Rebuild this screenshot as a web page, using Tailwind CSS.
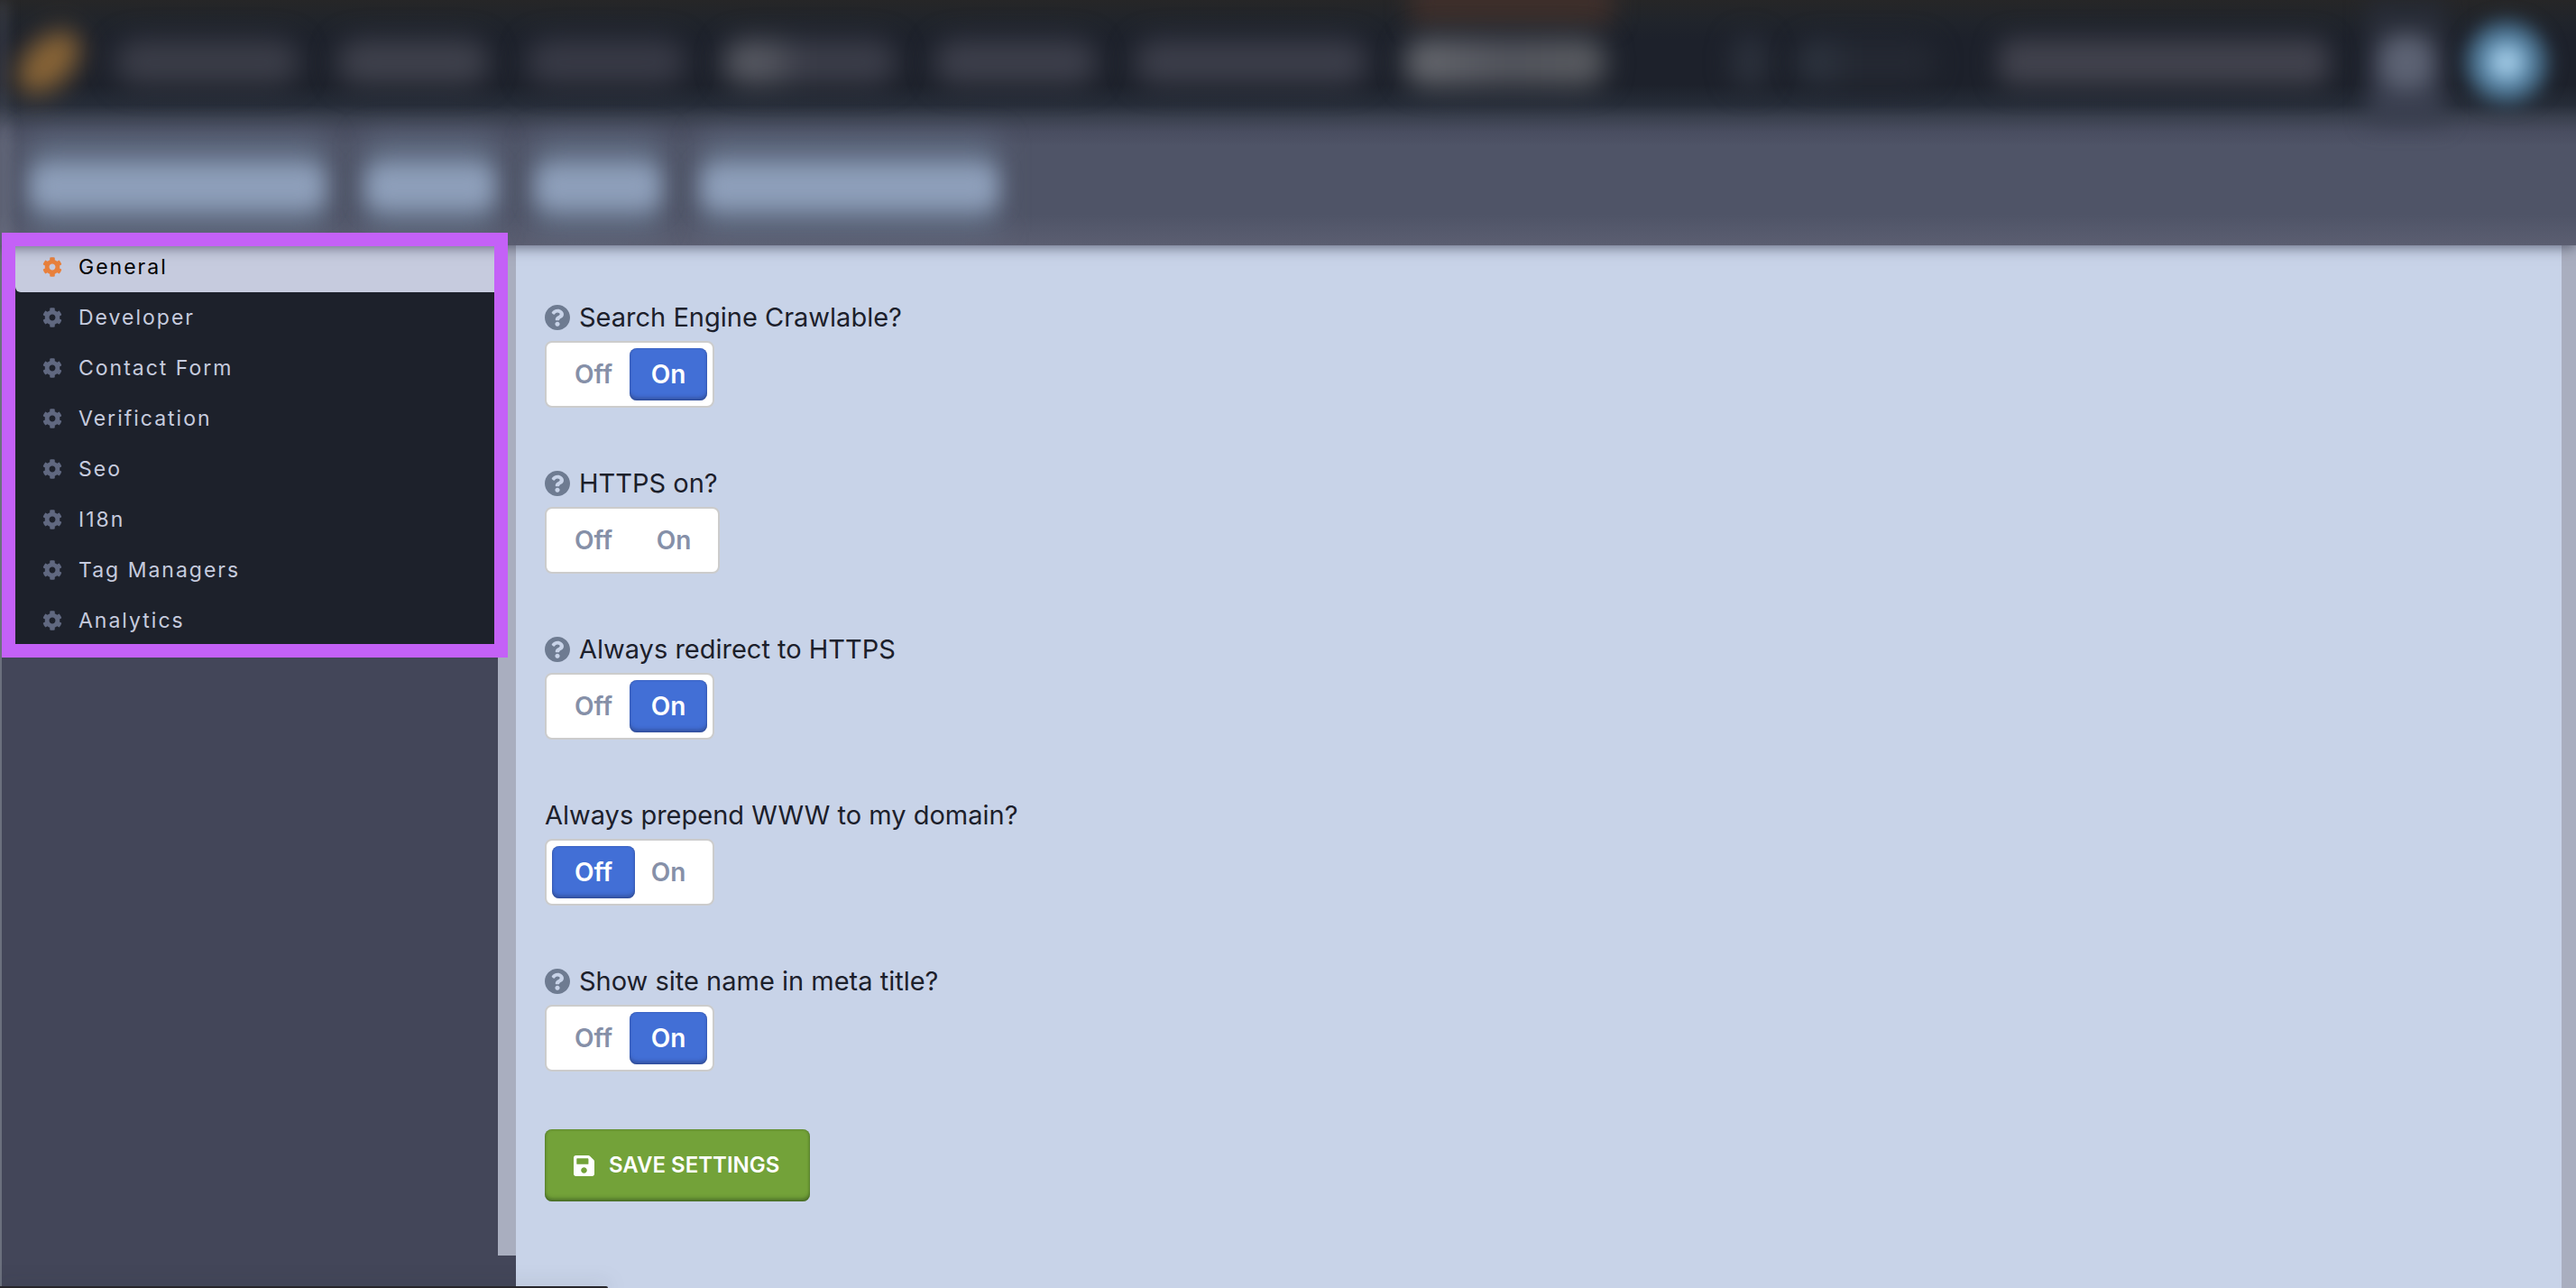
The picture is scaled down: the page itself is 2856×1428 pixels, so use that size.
<!DOCTYPE html>
<html lang="en">
<head>
<meta charset="utf-8">
<title>Settings</title>
<script src="https://cdn.jsdelivr.net/npm/@tailwindcss/browser@4"></script>
</head>
<body class="relative flex min-h-screen flex-col overflow-x-hidden bg-[#c8d3e8] font-['Inter',sans-serif] text-[#1c202b]">

<svg class="hidden" aria-hidden="true">
  <symbol id="cog" viewBox="0 0 512 512"><path d="M487.4 315.7l-42.6-24.6c4.3-23.2 4.3-47 0-70.2l42.6-24.6c4.9-2.8 7.1-8.6 5.5-14-11.1-35.6-30-67.8-54.7-94.6-3.8-4.1-10-5.1-14.8-2.3L380.8 110c-17.9-15.4-38.5-27.3-60.8-35.1V25.8c0-5.6-3.9-10.5-9.4-11.7-36.7-8.2-74.3-7.8-109.2 0-5.5 1.2-9.4 6.1-9.4 11.7V75c-22.2 7.9-42.8 19.8-60.8 35.1L88.7 85.5c-4.9-2.8-11-1.9-14.8 2.3-24.7 26.7-43.6 58.9-54.7 94.6-1.7 5.4.6 11.2 5.5 14L67.3 221c-4.3 23.2-4.3 47 0 70.2l-42.6 24.6c-4.9 2.8-7.1 8.6-5.5 14 11.1 35.6 30 67.8 54.7 94.6 3.8 4.1 10 5.1 14.8 2.3l42.6-24.6c17.9 15.4 38.5 27.3 60.8 35.1v49.2c0 5.6 3.9 10.5 9.4 11.7 36.7 8.2 74.3 7.8 109.2 0 5.5-1.2 9.4-6.1 9.4-11.7v-49.2c22.2-7.9 42.8-19.8 60.8-35.1l42.6 24.6c4.9 2.8 11 1.9 14.8-2.3 24.7-26.7 43.6-58.9 54.7-94.6 1.5-5.5-.7-11.3-5.6-14.1zM256 336c-44.1 0-80-35.9-80-80s35.9-80 80-80 80 35.9 80 80-35.9 80-80 80z"/></symbol>
  <symbol id="help" viewBox="8 8 496 496"><path d="M504 256c0 136.997-111.043 248-248 248S8 392.997 8 256C8 119.083 119.043 8 256 8s248 111.083 248 248zM262.655 90c-54.497 0-89.255 22.957-116.549 63.758-3.536 5.286-2.353 12.415 2.715 16.258l34.699 26.31c5.205 3.947 12.621 3.008 16.665-2.122 17.864-22.658 30.113-35.797 57.303-35.797 20.429 0 45.698 13.148 45.698 32.958 0 14.976-12.363 22.667-32.534 33.976C247.128 238.528 216 254.941 216 296v4c0 6.627 5.373 12 12 12h56c6.627 0 12-5.373 12-12v-1.333c0-28.462 83.186-29.647 83.186-106.667 0-58.002-60.165-102-116.531-102zM256 338c-25.365 0-46 20.635-46 46 0 25.364 20.635 46 46 46s46-20.636 46-46c0-25.365-20.635-46-46-46z"/></symbol>
</svg>

<!-- Obscured top bar and tab row -->
<header class="relative z-10 shadow-[0_2px_14px_rgba(40,45,65,0.65)]">
  <div class="flex h-[272px] flex-col overflow-hidden bg-[linear-gradient(to_bottom,#262627_0px,#20242b_24px,#1d212b_44px,#1d212b_94px,#262c38_116px,#3a404e_130px,#494d60_146px,#4f5467_162px,#4f5467_238px,#5b5e71_272px)]">
    <div class="relative flex h-[138px] items-center pr-[30px] pl-3" aria-hidden="true">
      <div class="absolute top-0 left-0 h-full w-1 bg-[#6a6d7c] blur-[8px]"></div>
      <div class="absolute -top-6 left-[1564px] h-[50px] w-[224px] bg-[#3e2f2b] blur-[13px]"></div>
      <div class="h-[52px] w-[84px] -rotate-45 rounded-[50%] bg-[#886436] blur-[14px]"></div>
      <div class="ml-8 flex items-center gap-[42px]">
        <div class="h-[50px] w-[204px] rounded-3xl bg-[#3b3d48] blur-[15px]"></div>
        <div class="h-[50px] w-[168px] rounded-3xl bg-[#3f414c] blur-[15px]"></div>
        <div class="h-[50px] w-[176px] rounded-3xl bg-[#383a46] blur-[15px]"></div>
        <div class="h-[50px] w-[192px] rounded-3xl bg-[linear-gradient(to_right,#565861_25%,#3b3d49_45%)] blur-[15px]"></div>
        <div class="h-[50px] w-[180px] rounded-3xl bg-[#3d3f4b] blur-[15px]"></div>
        <div class="h-[50px] w-[258px] rounded-3xl bg-[#3c3e4a] blur-[15px]"></div>
        <div class="h-[54px] w-[222px] rounded-3xl bg-[linear-gradient(to_right,#686a70,#53555d_50%,#5a5c61)] blur-[15px]"></div>
      </div>
      <div class="ml-auto flex items-center">
        <div class="h-[60px] w-[40px] rounded-3xl bg-[#2b303b] blur-[14px]"></div>
        <div class="ml-8 h-[50px] w-[154px] rounded-3xl bg-[linear-gradient(to_right,#2c323d_20%,#242832_40%)] blur-[14px]"></div>
        <div class="ml-[70px] h-[52px] w-[366px] rounded-2xl bg-[#41424d] blur-[14px]"></div>
        <div class="ml-[44px] flex h-[138px] w-[84px] items-center justify-center bg-[linear-gradient(to_bottom,#252932,#323746_50%,#3e4354)] blur-[12px]">
          <div class="h-[60px] w-[60px] rounded-3xl bg-[#5c6273]"></div>
        </div>
        <div class="ml-[22px] size-[94px] rounded-full bg-[radial-gradient(closest-side,#c4e6fb_0%,#7ba9ca_38%,#48708e_70%,#3a566c_100%)] blur-[10px]"></div>
      </div>
    </div>
    <div class="relative flex h-[134px] items-center gap-[46px] pl-[34px]" aria-hidden="true">
      <div class="absolute top-0 left-0 h-full w-2 bg-[#777b8c] blur-[8px]"></div>
      <div class="relative w-[326px]"><div class="h-[104px] bg-[#65738a]/80 blur-[16px]"></div><div class="absolute inset-x-0 top-7 h-[52px] rounded-2xl bg-[#8e9fba] blur-[12px]"></div></div>
      <div class="relative w-[142px]"><div class="h-[104px] bg-[#65738a]/80 blur-[16px]"></div><div class="absolute inset-x-0 top-7 h-[52px] rounded-2xl bg-[#8e9fba] blur-[12px]"></div></div>
      <div class="relative w-[138px]"><div class="h-[104px] bg-[#65738a]/80 blur-[16px]"></div><div class="absolute inset-x-0 top-7 h-[52px] rounded-2xl bg-[#8e9fba] blur-[12px]"></div></div>
      <div class="relative w-[328px]"><div class="h-[104px] bg-[#65738a]/80 blur-[16px]"></div><div class="absolute inset-x-0 top-7 h-[52px] rounded-2xl bg-[#8e9fba] blur-[12px]"></div></div>
    </div>
  </div>
</header>

<div class="flex flex-1">
  <aside class="flex w-[572px] shrink-0 border-l-2 border-[#6b707d] bg-[#434659] pb-9">
    <nav class="relative flex-1" aria-label="Settings sections">
      <ul class="-mt-1 ml-[15px] bg-[#1d212b] text-[23px] tracking-[2px] text-[#c6cbde]">
        <li><a href="#general" aria-current="page" class="flex h-14 items-center gap-[18px] rounded-bl-md bg-[#c6cbde] pl-[30px] text-black"><svg class="size-[22px] fill-[#e8803c]"><use href="#cog"/></svg>General</a></li>
        <li><a href="#developer" class="flex h-14 items-center gap-[18px] pl-[30px]"><svg class="size-[22px] fill-[#606880]"><use href="#cog"/></svg>Developer</a></li>
        <li><a href="#contact" class="flex h-14 items-center gap-[18px] pl-[30px]"><svg class="size-[22px] fill-[#606880]"><use href="#cog"/></svg>Contact Form</a></li>
        <li><a href="#verification" class="flex h-14 items-center gap-[18px] pl-[30px]"><svg class="size-[22px] fill-[#606880]"><use href="#cog"/></svg>Verification</a></li>
        <li><a href="#seo" class="flex h-14 items-center gap-[18px] pl-[30px]"><svg class="size-[22px] fill-[#606880]"><use href="#cog"/></svg>Seo</a></li>
        <li><a href="#i18n" class="flex h-14 items-center gap-[18px] pl-[30px]"><svg class="size-[22px] fill-[#606880]"><use href="#cog"/></svg>I18n</a></li>
        <li><a href="#tags" class="flex h-14 items-center gap-[18px] pl-[30px]"><svg class="size-[22px] fill-[#606880]"><use href="#cog"/></svg>Tag Managers</a></li>
        <li><a href="#analytics" class="flex h-14 items-center gap-[18px] pl-[30px]"><svg class="size-[22px] fill-[#606880]"><use href="#cog"/></svg>Analytics</a></li>
      </ul>
      <!-- Highlight frame around the section list -->
      <div class="pointer-events-none absolute -top-[14px] left-0 z-20 h-[471px] w-[561px] border-[15px] border-[#c461f7]"></div>
    </nav>
    <div class="w-5 bg-[#a9aebf]"></div>
  </aside>

  <main class="flex-1 px-8 pt-[60px]">
    <form class="flex flex-col items-start">
      <fieldset class="h-[184px]">
        <legend class="flex h-10 items-center gap-[10px] text-[29px]"><svg class="size-7 fill-[#6e7b91]"><use href="#help"/></svg>Search Engine Crawlable?</legend>
        <div class="mt-[6px] inline-flex h-[74px] rounded-lg border-2 border-[#cccccc] bg-white p-[6px] text-[28px] font-semibold text-[#8690a8]">
          <label class="flex w-[92px] items-center justify-center rounded-lg has-checked:bg-[#426fd6] has-checked:text-white has-checked:shadow-[inset_0_-4px_4px_-1px_rgba(40,60,120,0.6),inset_0_0_2px_rgba(40,60,120,0.6)]"><input type="radio" name="crawl" class="sr-only">Off</label>
          <label class="-ml-[6px] flex w-[86px] items-center justify-center rounded-lg has-checked:bg-[#426fd6] has-checked:text-white has-checked:shadow-[inset_0_-4px_4px_-1px_rgba(40,60,120,0.6),inset_0_0_2px_rgba(40,60,120,0.6)]"><input type="radio" name="crawl" checked class="sr-only">On</label>
        </div>
      </fieldset>
      <fieldset class="h-[184px]">
        <legend class="flex h-10 items-center gap-[10px] text-[29px]"><svg class="size-7 fill-[#6e7b91]"><use href="#help"/></svg>HTTPS on?</legend>
        <div class="mt-[6px] inline-flex h-[74px] rounded-lg border-2 border-[#cccccc] bg-white p-[6px] text-[28px] font-semibold text-[#8690a8]">
          <label class="flex w-[92px] items-center justify-center rounded-lg"><input type="radio" name="https" class="sr-only">Off</label>
          <label class="flex w-[86px] items-center justify-center rounded-lg"><input type="radio" name="https" class="sr-only">On</label>
        </div>
      </fieldset>
      <fieldset class="h-[184px]">
        <legend class="flex h-10 items-center gap-[10px] text-[29px]"><svg class="size-7 fill-[#6e7b91]"><use href="#help"/></svg>Always redirect to HTTPS</legend>
        <div class="mt-[6px] inline-flex h-[74px] rounded-lg border-2 border-[#cccccc] bg-white p-[6px] text-[28px] font-semibold text-[#8690a8]">
          <label class="flex w-[92px] items-center justify-center rounded-lg has-checked:bg-[#426fd6] has-checked:text-white has-checked:shadow-[inset_0_-4px_4px_-1px_rgba(40,60,120,0.6),inset_0_0_2px_rgba(40,60,120,0.6)]"><input type="radio" name="redirect" class="sr-only">Off</label>
          <label class="-ml-[6px] flex w-[86px] items-center justify-center rounded-lg has-checked:bg-[#426fd6] has-checked:text-white has-checked:shadow-[inset_0_-4px_4px_-1px_rgba(40,60,120,0.6),inset_0_0_2px_rgba(40,60,120,0.6)]"><input type="radio" name="redirect" checked class="sr-only">On</label>
        </div>
      </fieldset>
      <fieldset class="h-[184px]">
        <legend class="flex h-10 items-center gap-[10px] text-[29px]">Always prepend WWW to my domain?</legend>
        <div class="mt-[6px] inline-flex h-[74px] rounded-lg border-2 border-[#cccccc] bg-white p-[6px] text-[28px] font-semibold text-[#8690a8]">
          <label class="flex w-[92px] items-center justify-center rounded-lg has-checked:bg-[#426fd6] has-checked:text-white has-checked:shadow-[inset_0_-4px_4px_-1px_rgba(40,60,120,0.6),inset_0_0_2px_rgba(40,60,120,0.6)]"><input type="radio" name="www" checked class="sr-only">Off</label>
          <label class="-ml-[6px] flex w-[86px] items-center justify-center rounded-lg has-checked:bg-[#426fd6] has-checked:text-white has-checked:shadow-[inset_0_-4px_4px_-1px_rgba(40,60,120,0.6),inset_0_0_2px_rgba(40,60,120,0.6)]"><input type="radio" name="www" class="sr-only">On</label>
        </div>
      </fieldset>
      <fieldset class="h-[184px]">
        <legend class="flex h-10 items-center gap-[10px] text-[29px]"><svg class="size-7 fill-[#6e7b91]"><use href="#help"/></svg>Show site name in meta title?</legend>
        <div class="mt-[6px] inline-flex h-[74px] rounded-lg border-2 border-[#cccccc] bg-white p-[6px] text-[28px] font-semibold text-[#8690a8]">
          <label class="flex w-[92px] items-center justify-center rounded-lg has-checked:bg-[#426fd6] has-checked:text-white has-checked:shadow-[inset_0_-4px_4px_-1px_rgba(40,60,120,0.6),inset_0_0_2px_rgba(40,60,120,0.6)]"><input type="radio" name="sitename" class="sr-only">Off</label>
          <label class="-ml-[6px] flex w-[86px] items-center justify-center rounded-lg has-checked:bg-[#426fd6] has-checked:text-white has-checked:shadow-[inset_0_-4px_4px_-1px_rgba(40,60,120,0.6),inset_0_0_2px_rgba(40,60,120,0.6)]"><input type="radio" name="sitename" checked class="sr-only">On</label>
        </div>
      </fieldset>
      <button type="submit" class="flex h-20 w-[294px] items-center gap-4 rounded-lg bg-[#73a239] pl-8 text-[24px] font-semibold whitespace-nowrap text-white shadow-[inset_0_-4px_4px_-1px_rgba(50,80,30,0.6),inset_0_0_3px_rgba(50,80,30,0.6)]">
        <svg class="size-[23px] fill-white" viewBox="0 32 448 448"><path d="M433.941 129.941l-83.882-83.882A48 48 0 0 0 316.118 32H48C21.49 32 0 53.49 0 80v352c0 26.51 21.49 48 48 48h352c26.51 0 48-21.49 48-48V163.882a48 48 0 0 0-14.059-33.941zM224 416c-35.346 0-64-28.654-64-64 0-35.346 28.654-64 64-64s64 28.654 64 64c0 35.346-28.654 64-64 64zm96-304.52V212c0 6.627-5.373 12-12 12H76c-6.627 0-12-5.373-12-12V108c0-6.627 5.373-12 12-12h228.52c3.183 0 6.235 1.264 8.485 3.515l3.48 3.48A11.996 11.996 0 0 1 320 111.48z"/></svg>
        SAVE SETTINGS
      </button>
    </form>
  </main>
  <div class="w-4 bg-[#a9aebf]"></div>
</div>

<!-- Edge of the browser status bubble -->
<div class="absolute bottom-0 left-0 h-0.5 w-[674px] rounded-tr bg-[#27262b] shadow-[0_0_20px_rgba(40,50,60,0.5)]"></div>
</body>
</html>
